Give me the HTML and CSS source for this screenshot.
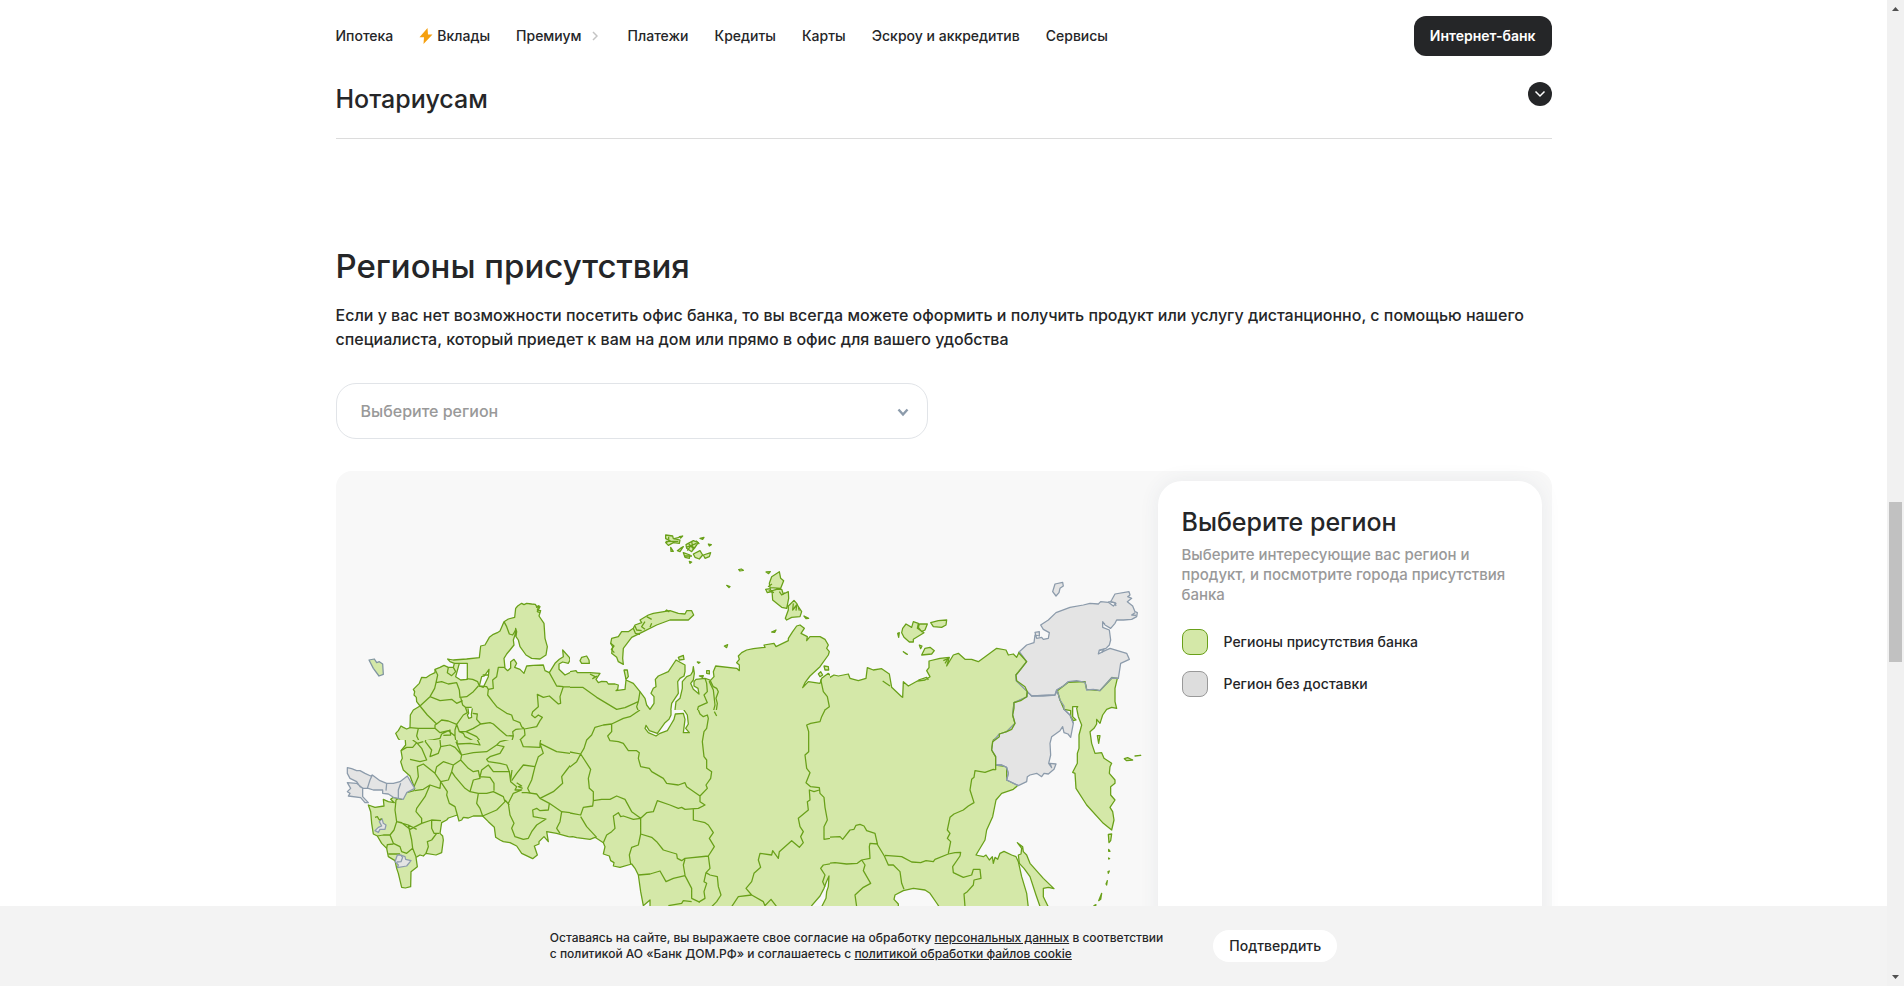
FILE: index.html
```html
<!DOCTYPE html>
<html lang="ru">
<head>
<meta charset="utf-8">
<title>Регионы присутствия</title>
<meta name="viewport" content="width=device-width, initial-scale=1">
<link rel="stylesheet" href="styles.css">
</head>
<body>
<div class="window">
  <div class="page">
    <header class="header">
      <div class="container header-row">
        <nav class="nav">
          <a href="#">Ипотека</a>
          <a href="#" class="nav-flash"><svg width="14" height="16" viewBox="0 0 14 16" aria-hidden="true"><path d="M8.500 0 .5 9.200H5L4.500 16l9-9.500H9Z" fill="#f5a00f"/></svg>Вклады</a>
          <a href="#" class="nav-more">Премиум<svg width="6" height="10" viewBox="0 0 6 10" aria-hidden="true"><path d="m1 1 4 4-4 4" fill="none" stroke="#c4c4c4" stroke-width="1.500"/></svg></a>
          <a href="#">Платежи</a>
          <a href="#">Кредиты</a>
          <a href="#">Карты</a>
          <a href="#">Эскроу и аккредитив</a>
          <a href="#">Сервисы</a>
        </nav>
        <button class="bank-button" type="button">Интернет-банк</button>
      </div>
    </header>

    <main class="content">
      <div class="container">
        <section class="accordion">
          <h3 class="accordion-title">Нотариусам</h3>
          <button class="accordion-toggle" type="button" aria-label="Развернуть"><svg width="12" height="8" viewBox="0 0 12 8" aria-hidden="true"><path d="m1.500 1.500 4.500 4.500 4.500-4.500" fill="none" stroke="#fff" stroke-width="1.500"/></svg></button>
        </section>

        <section class="regions">
          <h2 class="regions-title">Регионы присутствия</h2>
          <p class="regions-text">Если у вас нет возможности посетить офис банка, то вы всегда можете оформить и получить продукт или услугу дистанционно, с помощью нашего специалиста, который приедет к вам на дом или прямо в офис для вашего удобства</p>
          <div class="select-wrap">
            <select class="select" aria-label="Выберите регион"><option>Выберите регион</option></select>
            <svg class="select-arrow" width="12" height="9" viewBox="0 0 12 9" aria-hidden="true"><path d="m1.500 1.500 4.500 5 4.500-5" fill="none" stroke="#8c9bab" stroke-width="2.400"/></svg>
          </div>

          <div class="map-card">
            <svg class="map" viewBox="336 471 822 520" role="img" aria-label="Карта регионов">
              <svg x="340" y="580" width="230" height="160" viewBox="0 0 690 480">
                <path class="on" d="M195 520 195 505 185 487 175 476 167 460 175 452 183 438 190 442 200 447 210 443 211 405 220 390 240 378 230 365 229 352 222 345 224 335 220 328 238 310 245 292 258 293 270 285 285 278 285 268 300 262 312 256 325 262 340 262 343 250 330 245 323 237 340 240 380 237 418 233 422 198 435 195 448 172 460 163 472 158 480 153 492 125 505 117 524 112 527 85 533 78 545 70 552 74 560 70 575 72 586 73 590 80 597 77 592 90 602 92 597 108 612 130 615 175 622 200 618 225 600 237 575 235 558 225 540 200 535 180 528 170 530 155 527 145 525 165 520 180 522 195 510 210 500 222 492 235 495 265 503 272 512 264 512 245 522 238 530 250 524 262 540 268 552 280 560 258 580 256 610 255 615 272 628 278 645 250 658 238 670 230 668 210 688 232 690 240 685 250 668 246 657 252 657 268 675 285 690 278 705 274 740 272 740 520Z"/>
                <path class="water" d="M358 250 382 250 382 298 362 300 347 290ZM425 290 433 288 447 268 445 290 430 322 418 318ZM384 385 386 400 382 405 386 415 395 412 394 403 397 385"/>
                <path class="line" d="M492 125 500 140 508 162 518 165 527 150M495 262 475 262 470 290 458 300 460 325 445 328 440 320 418 318 413 305 398 298 380 296M325 262 322 278 335 287 347 275 340 262M343 250H358M285 268 293 285 288 308 284 325 270 350M288 308 305 305 325 312 350 308 358 330 360 352 380 350 400 335 415 318M362 352 368 375 380 385M270 350 300 362 335 358 350 370 368 362M270 350 240 378M240 378 262 405 290 432 305 420 325 423 350 433 370 405 382 398 376 382 395 382M398 400 412 402 410 418 422 432 400 445 378 455 358 455 350 433M422 432 450 428 460 432 480 450 500 467 520 468 518 455 528 448 553 445M445 328 443 345 458 365 470 380 500 400 515 405 520 420 540 428 545 440 553 447 590 440 600 422 607 412 595 405 585 413 575 405 578 395 595 380 592 343 610 352 628 348 655 372 662 370 660 350 670 320 740 322M670 320 650 318 628 278M553 447 555 465 540 480 548 500M210 443 235 445 285 445 285 435 290 432M285 445 300 458 325 452 345 468 345 450 350 433M235 445 230 468 238 485 275 480 300 475 305 462 330 450 332 465 310 466M345 468 350 500M358 455 370 460 375 470 405 485 430 495 410 470 378 455M430 495 470 485 515 485 520 468M428 285H447M588 82 600 80 592 95 600 98"/>
                <path class="exclave" d="M87 240 103 237 110 248 118 245 128 252 130 283 117 288 100 265Z"/>
              </svg>
              <svg x="340" y="740" width="230" height="168" viewBox="0 0 690 504">
                <path class="on" d="M195-10 197 15 183 32 187 55 182 65 190 90 210 108 224 145 222 152 200 158 185 178 160 172 152 178 163 188 145 185 130 178 132 198 105 202 85 195 92 215 95 250 100 282 112 288 125 310 140 325 145 350 165 362 170 385 175 400 185 442 196 444 212 440 213 395 232 380 228 352 240 345 250 348 258 340 288 345 305 338 310 300 308 288 300 280 305 248 320 240 325 234 352 225 357 243 365 240 370 232 385 234 400 228 428 228 445 245 463 262 467 292 480 300 490 305 510 308 530 318 545 340 578 356 592 345 583 318 597 312 597 305 612 290 625 305 620 275 650 280 685 290 740 295V-10Z"/>
                <path class="line" d="M224 152 250 148 270 135 300 145 302 125 285 100 250 72 232 80 235 110 222 140M183 32 200 22 218 22 230 8 245 25 260 60 240 65 210 58M258 -5 256 5 275 30 270 50 295 40 302 20 300 0M218 0 232 10 250 5M302 20 330 15 345 22 365 45 362 60 340 75 310 65 290 80 285 100 302 125 325 120 335 95 340 75M350-5 352 12 390 10 420 15 410-5M348 5 365 45 400 38 440 35 470 15 492 20 480 40 450 50 440 58 445 65 480 70 500 75 508 95 460 95 445 75 425 90 420 110 450 112 462 130 462 152M362 60 385 85 400 95 415 92 420 115 400 120 390 155 415 160M340 75 335 95 345 110 375 145 390 155M302 125 322 155 320 165 328 190 345 200 352 225M200 158 168 180 165 210 170 245M270 135 255 170 230 205 228 215 245 235 245 250 210 268 185 248 170 245M415 160 410 190 420 205 428 228 470 210 495 185 490 170 460 155 440 160 415 160M508 95 512 125 530 140 525 150 545 150 520 160 505 190 510 225 522 250 515 265 525 290 550 298M515 122 530 100 550 75 585 80M516 90 512 118M530 128 545 138 535 140 548 145M495 180 508 195M550 298 565 295 575 275 590 255 618 237 580 230 578 210 590 205 600 212 625 210 628 190 600 175 590 162 560 158 545 158M628 190 665 215 660 245 650 265 660 280M665 215 690 218 740 222M600 175 640 155 668 130 665 110 680 90 715 45 690 40 650 35 600 10 602 0M585 80 575 120 563 145 570 160M585 80 595 50 610 40 600 10 600 22 550 20 540-5M470 15 480 5 520-5M170 245 205 255 215 300 218 325 228 350M170 245 162 270 150 285 160 310 180 320 185 335 200 340 218 325M112 288 130 285 150 285M140 325 142 314 160 312M145 342 180 342M205 255 230 268M245 250 275 240 275 265 282 280 290 280 275 300 262 305 265 320 258 340M275 240 303 242M282 280 298 280"/>
                <path class="off" d="M22 83 35 86 50 92 60 92 75 100 92 108 97 105 120 122 140 130 160 130 180 125 202 108 215 130 224 145 200 158 190 178 175 175 160 172 145 162 128 160 128 150 100 150 85 145 70 145 60 140 50 125 30 115 22 100ZM22 128 50 130 68 145 68 170 85 188 75 188 62 173 25 168 30 160 22 155 32 145ZM182 345 195 350 197 358 213 362 200 378 172 383 175 375 165 365 172 345Z"/>
                <path class="off" d="M105 272 115 262 125 258 118 245 126 236 130 250 138 255 135 268 120 268 115 277Z"/>
                <path class="line" d="M105 232 112 230 118 240 125 236"/>
                <path class="line-off" d="M97 105 90 120 82 145M140 130 138 152M182 130 175 150 175 175M182 345 188 352 183 365 170 366"/>
              </svg>
              <svg x="570" y="520" width="260" height="190" viewBox="0 0 780 570">
                <path class="on" d="M-10 455 0 455 18 452 22 458 60 458 90 460 78 478 85 488 95 484 110 485 115 492 135 492 145 495 143 508 138 512 165 508 168 480 190 490 210 515 225 535 230 555 240 568 252 550 252 530 243 520 250 505 258 500 256 478 265 468 295 455 318 420 345 435 345 455 342 468 330 475 323 485 325 520 305 550 300 590 315 590 315 570 318 545 330 535 337 505 337 485 350 470 362 465 368 455 370 440 373 460 370 480 362 490 370 508 387 522 384 505 372 498 372 485 378 478 405 475 420 480 430 500 440 505 445 515 438 535 442 550 437 585 430 575 435 555 430 510 418 485 432 470 430 455 437 438 500 445 508 452 508 435 500 428 508 418 505 408 515 398 530 390 550 386 585 382 582 375 612 370 618 380 655 362 655 355 668 335 680 318 690 315 703 325 693 340 712 350 710 362 720 350 750 350 765 358 775 375 770 385 778 395 775 405 750 440 720 468 705 488 698 503 715 485 750 490 755 475 775 460 785 470 800 465V600H-10Z"/>
                <path class="line" d="M-5 502 38 502 80 532 140 568 165 563 205 545M210 515 205 545 200 560 205 573 188 590 150 598M405 475 410 490 412 515 402 525 412 548 385 560 382 572 390 585 415 590M752 478 760 515 772 530 778 560 762 572 760 600"/>
                <path class="on" d="M125 355 145 350 155 335 175 335 190 325 195 315 215 308 210 300 235 285 250 280 300 272 325 280 345 282 350 272 365 272 371 285 355 300 300 300 260 315 220 335 185 352 160 385 158 415 160 433 145 425 140 412 125 400 128 380 122 370ZM162 450 172 450 175 470 168 478ZM35 412 50 408 57 420 58 430 35 430 30 422ZM325 412 340 406 342 418 328 420ZM628 155 632 175 641 182 632 205 600 203 598 190 605 170ZM606 212 620 208 635 208 640 222 655 215 656 235 650 265 635 262 620 250 608 240ZM672 241 680 250 685 260 695 275 690 290 665 292 650 300 646 295 655 270 655 258ZM587 208 600 206 605 215 592 218ZM745 462 752 455 758 465 750 470ZM762 438 775 440 776 450 765 450ZM410 452 418 452 418 462 410 460ZM287 45 308 48 310 56 330 60 328 70 310 68 295 76 287 68 300 62 287 56ZM348 74 370 62 385 68 380 75 365 95 350 85ZM340 98 360 105 358 115 345 112ZM370 102 390 92 398 105 388 117 375 112ZM400 105 422 98 418 110 405 115ZM390 55 402 52 398 58ZM415 72 424 74 418 78ZM302 82 310 94 303 94ZM322 92 330 86 340 80 330 95ZM358 124 365 126 360 130ZM328 50 338 48 332 54ZM506 149 514 147 520 151 510 153ZM588 156 601 155 596 161ZM470 196 480 200 477 203ZM605 336 618 330 614 337ZM463 378 473 374 470 383ZM702 288 716 295 708 296ZM382 426 390 427 386 430ZM388 468 400 467 398 472Z"/>
                <path class="line" d="M190 325 196 340 210 343M195 318 200 330 215 332M230 290 245 298M122 370 132 378 124 388 133 398M225 305 215 320 225 328M245 310 240 322M285 275 290 270 298 276M365 65 370 90M355 70 372 88M348 82 380 70M352 92 362 78 376 84M378 62 388 72M342 108 366 108M287 64 325 64M296 50V58M312 56 328 52M594 200 606 192M596 212 612 218M628 215 635 225 645 218M670 250 668 270 680 255 678 272M685 262 688 272M60 462 75 470 68 476 82 468"/>
              </svg>
              <svg x="570" y="710" width="260" height="198" viewBox="0 0 780 594">
                <path class="on" d="M-10 382 8 380 20 383 60 388 75 382 100 398 105 410 100 432 118 438 122 452 132 458 130 468 150 472 185 462 195 475 205 495 212 545 220 587 240 570 240 620H800V-10H-10Z"/>
                <path class="water" d="M303-10 303 15 297 28 285 38 262 70 238 62 228 46 225 55 235 68 258 78 270 70 292 62 302 45 312 28 316 12 340 10 345 28 340 68 358 68 347 55 355 42 352 15 335-10ZM777 498 768 518 762 535 750 558 725 587 720 600 750 600 768 565 770 545 775 530Z"/>
                <path class="line" d="M-5 125 32 132 20 155-5 175M210 0 180 20 160 25 125 42 100 45 75 52 65 75 50 90 42 115 32 132 62 178 55 205 58 235 70 245 70 272 95 268 120 268 140 258 165 268 185 305 212 325M70 272 68 288 40 292 32 315-5 308M32 320 50 350 80 382M125 42 125 65 113 78 120 92 145 95 160 100 175 122 200 122 208 128 205 145 212 170 238 175 245 185 280 205 290 220 325 225 345 218 350 230 390 258 390 275 405 285 385 295 345 298 335 292 325 295 300 285 262 272 250 305 230 308 212 325 190 328 160 318 152 320 145 308 130 318 135 355 125 365 110 375 100 398M212 325 212 372 205 405 185 412 178 435 182 462M212 372 245 382 260 395 280 420 320 432 322 445 335 452 345 445 415 438 433 410 418 385 430 368 415 345 405 338 370 330V298M345 447 340 465 345 495M205 495 240 492 270 483 288 515 310 505 345 497 365 535 365 565 390 577M295 587 335 580 340 572 365 575M415 438 420 475 408 488 402 515 410 520 402 545 405 565 385 577M408 488 420 495 442 500 445 530 453 555 440 575 425 590M383-5 390 12 400 20 412 15 415 25 410 55 402 65 397 95 402 140 410 150 410 175 425 185 422 205 408 225 412 235 390 258M433 5 440 18M770-10 755 20 750 35 722 40 710 45 716 65 716 125 705 135 710 175 720 188 708 218 722 230 748 233 750 250 762 262 765 292 772 330 762 350 762 388 810 380M748 240 732 245 718 240 720 270 712 275 715 300 685 325 690 350 700 365 692 380 700 398 688 412 665 392 628 425 625 445 608 422 605 435 570 430 565 450 572 472 552 490 545 515 528 535 545 555 505 560 485 590M545 555 580 575 585 587 603 568 620 590M810 455 790 460 760 465 752 475 765 495 758 515 765 530"/>
              </svg>
              <svg x="830" y="520" width="328" height="388" viewBox="0 -240 984 1164">
                <path class="on" d="M-10 225 0 232 12 225 25 228 55 222 60 235 85 242 108 235 112 203 130 210 155 206 178 222 185 262 215 290 218 292 220 245 235 258 262 243 285 240 300 230 290 212 297 203 297 183 330 175 358 172 350 198 370 165 385 160 405 178 425 178 445 185 500 145 528 150 535 165 550 162 560 172 568 155 590 185 558 225 560 242 592 275 590 292 552 308 548 345 555 370 530 395 490 420 485 450 497 470 497 495 530 500 530 540 565 555 550 568 515 580 498 600 488 650 470 690 465 720 438 765 460 770 468 765 478 780 487 770 490 790 495 772 503 778 510 760 522 754 545 765 558 770 565 785 575 830 590 880 597 940H340L322 912 300 880 285 870 250 865 220 872 195 885 192 898 205 912 205 940H-10Z"/>
                <path class="line" d="M497 510 490 508 465 517 435 512 432 532 425 538 420 570 432 608 415 618 400 630 372 642 360 652 352 690 360 700 352 715 362 725 355 760M355 762 375 758 392 757 390 768 368 800 370 818 400 832 425 825 430 808 450 808 453 835 432 840 430 855 412 875 402 882 405 920M355 762 315 778 310 785 288 782 272 788 245 786 215 770 165 766M-5 712 30 710 38 718 60 690 72 688 78 676 90 673 102 678 110 692 135 700 143 735 163 768 175 795 190 795 210 815 215 850 222 868M-5 790 15 788 50 792 82 790 95 780 120 775 118 740 120 730 143 732M95 780 105 795 100 812 122 850 100 862 75 885 80 920M340 182 355 175 345 190M265 240 290 232 295 240M158 243 180 258"/>
                <path class="off" d="M592 275 605 288 640 286 675 285 682 272 690 300 702 318 702 328 720 345 730 370 722 412 714 402 702 398 698 380 690 392 665 410 660 430 662 465 656 490 665 503 660 490 678 492 672 508 655 522 642 520 635 530 620 520 600 525 592 530 590 545 565 557 530 540 535 520 530 502 515 495 497 495 497 470 485 450 488 425 508 402 530 395 555 370 548 345 552 308 592 290ZM632 75 655 60 678 38 720 22 760 15 780 10 805 12 812 5 835 7 850 18 858 10 842 5 845 0 855-18 897-25 900-15 893-10 905-5 892 5 908 18 915 35 922 38 920 50 905 58 880 60 860 60 855 70 842 85 825 75 818 65 818 82 838 90 842 120 838 135 828 145 808 150 805 162 825 152 840 145 890 160 898 178 872 190 865 235 845 232 810 272 770 268 765 245 715 245 700 258 680 270 675 285 640 288 605 288 592 275 558 242 558 225 590 185 568 155 590 135 612 128 615 105 628 108 628 95 615 97 620 115 635 112 640 118 655 115 658 98 640 88ZM675-48 698-53 700-42 690-35 687-22 678-12 668-25Z"/>
                <path class="on" d="M682 272 715 247 765 245 770 268 810 272 845 235 862 235 855 265 855 305 860 325 845 322 830 328 818 345 810 370 800 358 800 372 792 385 780 395 785 430 795 460 815 458 822 475 845 490 840 500 838 520 855 540 855 550 842 560 842 585 855 600 840 622 848 635 852 660 845 690 820 670 770 615 738 565 735 520 728 517 742 490 742 460 747 445 747 405 755 375 745 350 740 325 743 320 728 320 728 350 738 360 730 362 722 350 722 332 702 328 690 300Z"/>
                <path class="line-off" d="M592 275 605 288 640 286 675 285 680 270 700 258 715 245 740 242 765 247 770 270 790 268 810 272 845 235 865 235M682 272 690 300 702 318 702 328 720 345 730 370M497 495 515 495 530 502 535 520 530 540 565 557M818 68 825 72M835 5 855 8 858 18M915 38 905 45 918 46M808 152 822 148 815 158"/>
                <path class="line" d="M565 158 575 168 590 185 572 208 558 225 560 242 585 260 592 275 590 290 572 302 552 308 552 325 548 345 555 370 545 388 530 395 508 402 508 410 488 425 485 450 497 470 497 510"/>
                <path class="on" d="M562 728 578 740 580 755 590 765 600 790 640 835 672 866 655 862 640 865 640 890 657 925 632 925 618 885 600 830 582 805 568 790 565 765 573 762 575 745ZM218 85 228 72 245 82 250 65 265 70 262 85 282 98 250 118 250 126 238 126 222 112 215 98ZM268 72 292 72 285 90 275 95 265 82ZM302 68 325 62 350 60 348 75 335 82 310 80ZM285 145 300 142 313 152 305 162 275 165ZM268 135 276 138 272 146ZM203 100 208 98 206 112ZM220 155 232 163 226 160ZM802 407 810 407 806 430ZM883 476 893 473 908 480 890 482ZM915 468 932 466 920 468ZM835 703 845 702 842 722 837 728ZM836 748 840 754 836 754ZM836 774 839 776 836 777ZM834 815 838 813 835 820ZM828 852 832 842 830 855ZM815 880 812 898 806 902ZM792 917 798 914 795 922Z"/>
              </svg>
            </svg>
            <aside class="panel">
              <h3 class="panel-title">Выберите регион</h3>
              <p class="panel-text">Выберите интересующие вас регион и продукт, и посмотрите города присутствия банка</p>
              <ul class="legend">
                <li><span class="swatch swatch-on"></span>Регионы присутствия банка</li>
                <li><span class="swatch swatch-off"></span>Регион без доставки</li>
              </ul>
            </aside>
          </div>
        </section>
      </div>
    </main>

    <footer class="cookie">
      <p class="cookie-text">Оставаясь на сайте, вы выражаете свое согласие на обработку <a href="#">персональных данных</a> в соответствии<br>с политикой АО «Банк ДОМ.РФ» и соглашаетесь с <a href="#">политикой обработки файлов cookie</a></p>
      <button class="cookie-button" type="button">Подтвердить</button>
    </footer>
  </div>
  <div class="scrollbar" aria-hidden="true">
    <svg width="17" height="17" viewBox="0 0 17 17"><path d="M5 11h7L8.500 7Z" fill="#505050"/></svg>
    <div class="track"><div class="thumb"></div></div>
    <svg width="17" height="17" viewBox="0 0 17 17"><path d="M5 6h7l-3.500 4Z" fill="#505050"/></svg>
  </div>
</div>
</body>
</html>
```
FILE: styles.css
```css
* { box-sizing: border-box; }
body {
  margin: 0;
  color: #252628;
  background: #fff;
  font-family: Inter, "Noto Sans", sans-serif;
  font-size: 14px;
  font-weight: 500;
  line-height: 20px;
}
h2, h3, p, ul { margin: 0; padding: 0; font-weight: 500; }
button, select { font: inherit; color: inherit; border: 0; cursor: pointer; }
a { color: inherit; }

.window { display: flex; height: 100vh; overflow: hidden; }
.page { flex: 1; min-width: 0; display: flex; flex-direction: column; }
.container { width: 100%; max-width: 1216px; margin: 0 auto; }

.header { flex: none; padding: 16px 0; }
.header-row { display: flex; align-items: center; justify-content: space-between; }
.nav { display: flex; gap: 26px; }
.nav a { display: flex; align-items: center; text-decoration: none; white-space: nowrap; }
.nav-flash { gap: 4px; }
.nav-more { gap: 10px; padding-right: 4px; }
.bank-button {
  height: 40px;
  padding: 0 16px;
  border-radius: 12px;
  background: #252628;
  color: #fff;
  font-weight: 600;
}

.content { flex: 1; min-height: 0; overflow: hidden; }
.accordion {
  display: flex;
  align-items: flex-start;
  justify-content: space-between;
  padding: 10px 0 22px;
  border-bottom: 1px solid #dcdcdc;
}
.accordion-title { font-size: 25px; line-height: 34px; }
.accordion-toggle {
  display: flex;
  align-items: center;
  justify-content: center;
  width: 24px;
  height: 24px;
  padding: 0;
  border-radius: 50%;
  background: #252628;
}

.regions { padding-top: 107px; }
.regions-title { font-size: 33px; line-height: 40px; }
.regions-text { margin-top: 17px; font-size: 16px; line-height: 24px; }
.select-wrap { position: relative; width: 592px; max-width: 100%; margin-top: 32px; }
.select {
  width: 100%;
  height: 56px;
  padding: 0 24px;
  border: 1px solid #e1e4e8;
  border-radius: 20px;
  background: #fff;
  color: #999;
  font-size: 16px;
  appearance: none;
}
.select-arrow { position: absolute; right: 19px; top: 25px; pointer-events: none; }

.map-card {
  display: grid;
  grid-template-columns: minmax(0, 1fr) 384px;
  margin-top: 32px;
  padding-right: 10px;
  border-radius: 16px;
  background: #f8f8f8;
}
.map { display: block; width: 100%; }
.on, .off, .water, .line, .line-off, .exclave { stroke-width: 3.8; stroke-linejoin: round; }
.on { fill: #d4e8a8; stroke: #69a019; }
.off { fill: #e4e4e4; stroke: #8c9bab; }
.water { fill: #f8f8f8; stroke: #69a019; }
.line { fill: none; stroke: #69a019; }
.line-off { fill: none; stroke: #8c9bab; }
.exclave { fill: #d4e8a8; stroke: #7f94a0; }
.panel {
  margin: 10px 0;
  padding: 24px;
  border-radius: 24px;
  background: #fff;
  box-shadow: 0 0 20px rgba(60, 80, 100, 0.08);
}
.panel-title { font-size: 25px; line-height: 34px; }
.panel-text { margin-top: 6px; color: #999; font-size: 15px; }
.legend { display: grid; gap: 16px; margin-top: 24px; list-style: none; }
.legend li { display: flex; align-items: center; gap: 16px; }
.swatch { width: 26px; height: 26px; border: 1px solid; border-radius: 8px; }
.swatch-on { background: #d4e8a8; border-color: #69a019; }
.swatch-off { background: #ddd; border-color: #999; }

.cookie {
  flex: none;
  display: flex;
  align-items: center;
  justify-content: center;
  gap: 50px;
  height: 80px;
  background: #f3f3f3;
}
.cookie-text { font-size: 12px; line-height: 16px; }
.cookie-button { height: 32px; padding: 0 16px; border-radius: 16px; background: #fff; }

.scrollbar { flex: none; display: flex; flex-direction: column; width: 17px; background: #f1f1f1; }
.track { flex: 1; display: flex; flex-direction: column; padding: 0 2px; }
.track::before { content: ""; flex: 485; }
.track::after { content: ""; flex: 307; }
.thumb { flex: 160; background: #c1c1c1; }
```
